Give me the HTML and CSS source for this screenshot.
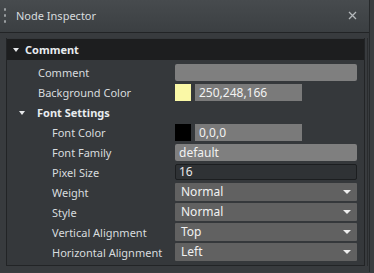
FILE: index.html
```html
<!DOCTYPE html>
<html>
<head>
<meta charset="utf-8">
<link rel="stylesheet" href="styles.css">
</head>
<body>
<div class="window">
  <div class="titlebar">
    <div class="grip"><i></i><i></i><i></i></div>
    <div class="title">Node Inspector</div>
    <svg class="close" width="9" height="9" viewBox="0 0 9 9"><path d="M1 1 L8 8 M8 1 L1 8" stroke="#b4b8bb" stroke-width="1.3" fill="none"/></svg>
  </div>
  <div class="content">
    <div class="panel">
      <div class="section-header"><span class="tri"></span>Comment</div>
      <div class="rows">
        <div class="row"><div class="label l1">Comment</div><div class="ctrl"><div class="input light"></div></div></div>
        <div class="row"><div class="label l1">Background Color</div><div class="ctrl color"><div class="swatch" style="background:#faf8a6"></div><div class="input cfield">250,248,166</div></div></div>
        <div class="row group"><span class="tri small"></span><div class="label bold">Font Settings</div></div>
        <div class="row"><div class="label l2">Font Color</div><div class="ctrl color"><div class="swatch" style="background:#000000"></div><div class="input cfield">0,0,0</div></div></div>
        <div class="row"><div class="label l2">Font Family</div><div class="ctrl"><div class="input light">default</div></div></div>
        <div class="row"><div class="label l2">Pixel Size</div><div class="ctrl"><div class="input spin">16</div></div></div>
        <div class="row"><div class="label l2">Weight</div><div class="ctrl"><div class="select">Normal<span class="arrow"></span></div></div></div>
        <div class="row"><div class="label l2">Style</div><div class="ctrl"><div class="select">Normal<span class="arrow"></span></div></div></div>
        <div class="row"><div class="label l2">Vertical Alignment</div><div class="ctrl"><div class="select">Top<span class="arrow"></span></div></div></div>
        <div class="row"><div class="label l2">Horizontal Alignment</div><div class="ctrl"><div class="select">Left<span class="arrow"></span></div></div></div>
      </div>
    </div>
    <div class="rail"></div>
  </div>
</div>
</body>
</html>
```
FILE: styles.css
```css
html, body {
  margin: 0;
  padding: 0;
}
body {
  width: 374px;
  height: 273px;
  background: #3a3d40;
  font-family: "Noto Sans", "Open Sans", sans-serif;
  font-size: 11px;
  color: #d8dcdf;
  overflow: hidden;
}
.window {
  width: 369px;
  border-right: 1px solid #26292b;
}
.titlebar {
  height: 32px;
  border-bottom: 1px solid #222426;
  background: linear-gradient(#474b4e, #3b3f42);
  display: flex;
  align-items: center;
  position: relative;
}
.grip {
  width: 16px;
  display: flex;
  flex-direction: column;
  gap: 3px;
  padding-left: 4px;
  box-sizing: border-box;
  margin-top: -1px;
}
.grip i {
  display: block;
  width: 2px;
  height: 3px;
  background: #9a9ea1;
  border-radius: 1px;
}
.title {
  flex: 1;
  color: #d8dcdf;
  line-height: 14px;
  margin-top: -1px;
}
.close {
  margin-right: 12px;
  margin-top: -2px;
}
.content {
  display: flex;
  padding: 5px 0 6px 6px;
  background: #383b3e;
}
.panel {
  width: 357px;
  border: 1px solid #222426;
  border-top: none;
  background: #35383b;
  padding-bottom: 3px;
}
.rail {
  width: 1px;
  margin-left: 2px;
  background: #2a2c2e;
}
.section-header {
  height: 21px;
  margin-top: 1px;
  background: #1d1e1f;
  color: #e8ecef;
  font-weight: bold;
  display: flex;
  align-items: center;
  padding-left: 6px;
  gap: 6px;
}
.tri {
  width: 0;
  height: 0;
  border-left: 3.5px solid transparent;
  border-right: 3.5px solid transparent;
  border-top: 4px solid #e6e8ea;
  margin-top: 1px;
}
.rows {
  padding-top: 2px;
}
.row {
  height: 20px;
  display: flex;
  align-items: center;
}
.label {
  width: 168px;
  box-sizing: border-box;
  line-height: 14px;
  padding-top: 1px;
}
.l1 { padding-left: 31px; }
.l2 { padding-left: 45px; }
.group .tri {
  margin-left: 12px;
  margin-right: 12px;
}
.bold {
  font-weight: bold;
  color: #e8ecef;
  padding-left: 0;
}
.ctrl {
  width: 182px;
  display: flex;
  gap: 4px;
}
.input {
  height: 17px;
  box-sizing: border-box;
  flex: 1;
  background: #7f7f7f;
  border-radius: 2px;
  color: #f2f2f2;
  padding-left: 4px;
  line-height: 17px;
  font-size: 12px;
}
.cfield {
  flex: none;
  width: 107px;
  background: #7a7a7a;
  border-radius: 0;
}
.swatch {
  width: 16px;
  height: 17px;
}
.spin {
  height: 16px;
  background: #2f3235;
  border: 1px solid #1c1e20;
  line-height: 14px;
  padding-left: 3px;
  color: #e8e8e8;
}
.select {
  flex: 1;
  height: 18px;
  box-sizing: border-box;
  background: #616161;
  border-radius: 1px;
  color: #f2f2f2;
  padding-left: 6px;
  line-height: 18px;
  font-size: 12px;
  display: flex;
  align-items: center;
  justify-content: space-between;
  padding-right: 6px;
}
.arrow {
  width: 0;
  height: 0;
  border-left: 4px solid transparent;
  border-right: 4px solid transparent;
  border-top: 4px solid #eeeeee;
}
```
